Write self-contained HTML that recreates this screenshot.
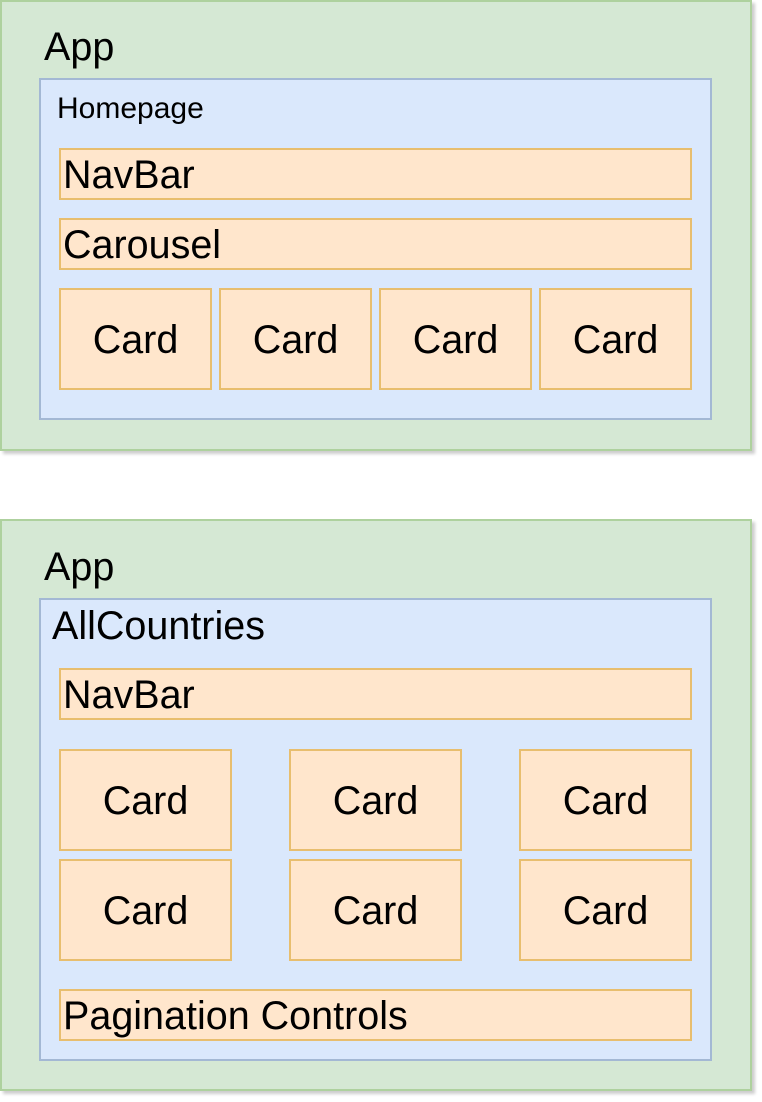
<!DOCTYPE html>
<html><head><style>
body{margin:0;width:762px;height:1102px;background:#fff;position:relative;font-family:"Liberation Sans",sans-serif;overflow:hidden}
.b{position:absolute;box-sizing:border-box}
.g{background:#d5e8d4;border:2px solid #aed19e;box-shadow:3px 3px 3px rgba(0,0,0,0.2)}
.u{background:#dae8fc;border:2px solid #a3b8d4}
.o{background:#ffe6cc;border:2px solid #e8be6e;font-size:39.5px;line-height:1;display:flex;align-items:center;padding-top:3px}
.c{justify-content:center}
.l{padding-left:2px}
.t{position:absolute;font-size:39.5px;line-height:1;color:#000}
</style></head><body>
<div class="b g" style="left:0;top:0;width:752px;height:451px"></div>
<div class="t" style="left:44px;top:28px">App</div>
<div class="b u" style="left:39px;top:78px;width:673px;height:342px"></div>
<div class="t" style="left:57px;top:94px;font-size:30px">Homepage</div>
<div class="b o l" style="left:59px;top:148px;width:633px;height:52px">NavBar</div>
<div class="b o l" style="left:59px;top:218px;width:633px;height:52px">Carousel</div>
<div class="b o c" style="left:59px;top:288px;width:153px;height:102px">Card</div>
<div class="b o c" style="left:219px;top:288px;width:153px;height:102px">Card</div>
<div class="b o c" style="left:379px;top:288px;width:153px;height:102px">Card</div>
<div class="b o c" style="left:539px;top:288px;width:153px;height:102px">Card</div>

<div class="b g" style="left:0;top:519px;width:752px;height:572px"></div>
<div class="t" style="left:44px;top:548px">App</div>
<div class="b u" style="left:39px;top:598px;width:673px;height:463px"></div>
<div class="t" style="left:52px;top:607px">AllCountries</div>
<div class="b o l" style="left:59px;top:668px;width:633px;height:52px">NavBar</div>
<div class="b o c" style="left:59px;top:749px;width:173px;height:102px">Card</div>
<div class="b o c" style="left:289px;top:749px;width:173px;height:102px">Card</div>
<div class="b o c" style="left:519px;top:749px;width:173px;height:102px">Card</div>
<div class="b o c" style="left:59px;top:859px;width:173px;height:102px">Card</div>
<div class="b o c" style="left:289px;top:859px;width:173px;height:102px">Card</div>
<div class="b o c" style="left:519px;top:859px;width:173px;height:102px">Card</div>
<div class="b o l" style="left:59px;top:989px;width:633px;height:52px">Pagination Controls</div>
</body></html>
